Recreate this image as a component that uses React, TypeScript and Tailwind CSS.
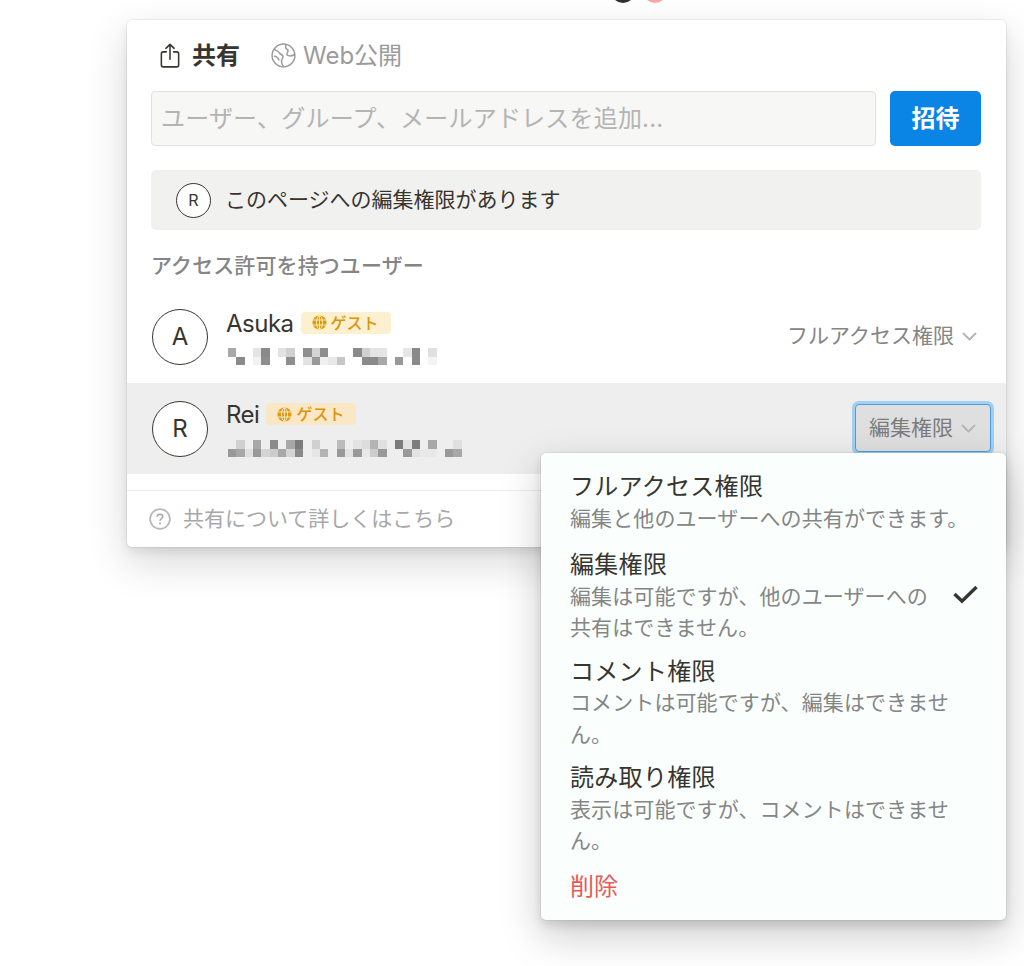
import React from "react";

const FONT = "font-['Inter','Noto_Sans_CJK_JP',sans-serif]";

const ShareIcon = () => (
  <svg width="20" height="27" viewBox="0 0 22 28" fill="none" stroke="#37352f" strokeWidth="1.7" strokeLinecap="round" strokeLinejoin="round">
    <path d="M7 10H3.5A2 2 0 0 0 1.5 12V24.5A2 2 0 0 0 3.5 26.5H18.5A2 2 0 0 0 20.5 24.5V12A2 2 0 0 0 18.5 10H15" />
    <path d="M11 18V2M6.5 6.2L11 1.8L15.5 6.2" />
  </svg>
);

const EarthIcon = () => (
  <svg width="25" height="25" viewBox="0 0 25 25" fill="none" stroke="#9b9b9b" strokeWidth="1.5" strokeLinejoin="round">
    <circle cx="12.5" cy="12.5" r="11.4" />
    <path d="M3.4 6.5C6 7.5 7.5 8 8.5 10C9.5 11.5 11 11.5 12 13C12.5 15 10.5 16 10.5 18C10.5 20 11.5 22.5 12.5 23.5" />
    <path d="M3 13C5.5 13.5 7.5 15 8 17.5" />
    <path d="M15 1.5C14 4 15 6 17 7C17.5 9 15.5 10 16 12C18 13.5 21 13 23.6 11.5" />
  </svg>
);

const BadgeGlobe = () => (
  <svg width="15" height="15" viewBox="0 0 15 15" fill="none" className="shrink-0">
    <circle cx="7.5" cy="7.5" r="7" fill="#dc9a12" />
    <g stroke="#fdf0cf" strokeWidth="0.9">
      <ellipse cx="7.5" cy="7.5" rx="3" ry="6.6" />
      <path d="M7.5 0.8V14.2M1 5H14M1 10H14" />
    </g>
  </svg>
);

const Chevron = () => (
  <svg width="15" height="9" viewBox="0 0 15 9" fill="none" stroke="#b5b5b5" strokeWidth="1.8" strokeLinecap="round" strokeLinejoin="round" className="shrink-0 mt-[2px]">
    <path d="M1.5 1.5L7.5 7.5L13.5 1.5" />
  </svg>
);

const Check = () => (
  <svg width="25" height="19" viewBox="0 0 25 19" fill="none" stroke="#37352f" strokeWidth="3.4" strokeLinejoin="miter" className="shrink-0">
    <path d="M1.5 9L9 16.2L23.5 2" />
  </svg>
);

const Help = () => (
  <svg width="22" height="22" viewBox="0 0 22 22" fill="none" className="shrink-0">
    <circle cx="11" cy="11" r="9.9" stroke="#b8b8b8" strokeWidth="1.7" />
    <path d="M8.2 8.6C8.3 7 9.5 6.2 11 6.2C12.6 6.2 13.8 7.1 13.8 8.6C13.8 10.6 11 10.6 11 12.8" stroke="#a8a8a8" strokeWidth="1.6" fill="none" />
    <circle cx="11" cy="15.6" r="1" fill="#a8a8a8" />
  </svg>
);

type Cell = [number, string];

const Mosaic = ({ top, bottom, width }: { top: Cell[]; bottom: Cell[]; width: number }) => (
  <svg width={width} height="17" viewBox={`0 0 ${width} 17`} shapeRendering="crispEdges" className="block ml-[2px]">
    {top.map(([i, c]) => (
      <rect key={`t${i}`} x={i * 8.35} y="0" width="8.4" height="8.5" fill={c} />
    ))}
    {bottom.map(([i, c]) => (
      <rect key={`b${i}`} x={i * 8.35} y="8.5" width="8.4" height="8.5" fill={c} />
    ))}
  </svg>
);

const asukaTop: Cell[] = [[0, "#a8a8a8"], [3, "#e4e4e4"], [4, "#8a8a8a"], [6, "#e2e2e2"], [7, "#d0d0d0"], [9, "#8e8e8e"], [10, "#d4d4d4"], [11, "#8e8e8e"], [15, "#8a8a8a"], [16, "#d0d0d0"], [17, "#e4e4e4"], [18, "#e4e4e4"], [21, "#e6e6e6"], [22, "#8a8a8a"], [24, "#e0e0e0"]];
const asukaBottom: Cell[] = [[1, "#8a8a8a"], [3, "#f2f2f2"], [4, "#8e8e8e"], [7, "#8e8e8e"], [9, "#e2e2e2"], [10, "#999999"], [11, "#f0f0f0"], [12, "#e8e8e8"], [13, "#c6c6c6"], [16, "#8a8a8a"], [17, "#8a8a8a"], [18, "#a8a8a8"], [20, "#999999"], [22, "#8a8a8a"], [24, "#f4f4f4"]];
const reiTop: Cell[] = [[1, "#d0d0d0"], [3, "#a8a8a8"], [5, "#8a8a8a"], [7, "#a8a8a8"], [8, "#7c7c7c"], [10, "#d0d0d0"], [13, "#bcbcbc"], [15, "#e2e2e2"], [16, "#dcdcdc"], [17, "#b4b4b4"], [18, "#e0e0e0"], [20, "#7c7c7c"], [21, "#e2e2e2"], [22, "#7c7c7c"], [24, "#a8a8a8"], [27, "#e0e0e0"]];
const reiBottom: Cell[] = [[0, "#999999"], [1, "#a8a8a8"], [2, "#e0e0e0"], [3, "#999999"], [4, "#d4d4d4"], [5, "#cccccc"], [6, "#a8a8a8"], [7, "#d4d4d4"], [8, "#8a8a8a"], [10, "#e6e6e6"], [11, "#b4b4b4"], [13, "#999999"], [14, "#e2e2e2"], [15, "#999999"], [16, "#e8e8e8"], [17, "#cccccc"], [18, "#999999"], [21, "#999999"], [22, "#e2e2e2"], [23, "#e8e8e8"], [24, "#e8e8e8"], [26, "#999999"], [27, "#a8a8a8"]];

const Avatar = ({ letter }: { letter: string }) => (
  <div className="w-[56px] h-[56px] shrink-0 rounded-full border-[1.5px] border-[#37352f] bg-white flex items-center justify-center text-[24px] text-[#37352f]">
    {letter}
  </div>
);

const Guest = ({ bg }: { bg: string }) => (
  <span className={`inline-flex items-center gap-[4px] h-[22px] w-[90px] pl-[11px] mb-[2px] rounded-[4px] text-[16px] tracking-normal font-medium text-[#d9960b] ${bg}`}>
    <BadgeGlobe />
    ゲスト
  </span>
);

const MenuItem = ({
  title,
  children,
  className,
}: {
  title: string;
  children: React.ReactNode;
  className: string;
}) => (
  <div className={className}>
    <div className="text-[24px] leading-[31.5px] tracking-[0.3px] text-[#37352f]">{title}</div>
    {children}
  </div>
);

export default function App() {
  return (
    <div className={`relative w-[1024px] h-[966px] overflow-hidden bg-white ${FONT}`}>
      <div className="absolute left-[611px] top-[-21px] w-[24px] h-[24px] rounded-full bg-[#2f2f2f]" />
      <div className="absolute left-[643px] top-[-21px] w-[24px] h-[24px] rounded-full bg-[#f3a9a9]" />

      <div className="pt-[20px] pl-[127px]">
        <div className="w-[879px] h-[527px] bg-white rounded-[5px] shadow-[0_0_0_1px_rgba(15,15,15,0.05),0_5px_10px_rgba(15,15,15,0.08),0_15px_40px_rgba(15,15,15,0.16)]">
          <div className="pl-[24px] pr-[25px] pt-[15px]">
            <div className="h-[40px] flex items-center pl-[9px]">
              <ShareIcon />
              <span className="ml-[12px] mt-[1px] text-[24px] font-semibold text-[#37352f]">共有</span>
              <span className="ml-[31px]"><EarthIcon /></span>
              <span className="ml-[7px] mt-[1px] text-[24px] text-[#9b9b9b]">Web公開</span>
            </div>

            <div className="mt-[16px] flex gap-[14px]">
              <input
                readOnly
                placeholder="ユーザー、グループ、メールアドレスを追加..."
                className="flex-1 min-w-0 h-[55px] px-[9px] bg-[#f7f7f5] border-[1.5px] border-[#e2e2e0] rounded-[4px] text-[24px] tracking-[0.2px] placeholder:text-[#b4b4b4] outline-none"
              />
              <div className="w-[91px] h-[55px] rounded-[5px] bg-[#0a85e6] text-white text-[24px] font-semibold flex items-center justify-center">
                招待
              </div>
            </div>

            <div className="mt-[24px] h-[60px] bg-[#f1f1ef] rounded-[5px] flex items-center pl-[25px]">
              <div className="w-[35px] h-[35px] rounded-full border-[1.5px] border-[#37352f] bg-white flex items-center justify-center text-[16px] text-[#37352f]">
                R
              </div>
              <span className="ml-[14px] text-[21px] text-[#37352f]">このページへの編集権限があります</span>
            </div>

            <div className="mt-[20px] h-[32px] flex items-center text-[21px] tracking-[0.1px] font-medium text-[#858585]">
              アクセス許可を持つユーザー
            </div>
          </div>

          <div className="mt-[9px]">
            <div className="h-[91px] pl-[25px] pr-[15px] flex items-center">
              <Avatar letter="A" />
              <div className="ml-[18px] flex-1">
                <div className="h-[30px] flex items-center gap-[7px] text-[24px] tracking-[-0.5px] text-[#37352f]">
                  Asuka
                  <Guest bg="bg-[#fdf0cf]" />
                </div>
                <div className="mt-[9px]"><Mosaic top={asukaTop} bottom={asukaBottom} width={214} /></div>
              </div>
              <div className="h-[48px] mb-[2px] px-[13px] flex items-center gap-[8px] text-[21px] text-[#858585] border-[1.5px] border-transparent">
                フルアクセス権限
                <Chevron />
              </div>
            </div>

            <div className="mt-[1px] h-[91px] pl-[25px] pr-[15px] flex items-center bg-[#eeeeee]">
              <Avatar letter="R" />
              <div className="ml-[18px] flex-1">
                <div className="h-[30px] flex items-center gap-[7px] text-[24px] tracking-[-0.5px] text-[#37352f]">
                  Rei
                  <Guest bg="bg-[#fae7c5]" />
                </div>
                <div className="mt-[10px]"><Mosaic top={reiTop} bottom={reiBottom} width={238} /></div>
              </div>
              <div className="h-[48px] mb-[2px] pl-[13px] pr-[14px] flex items-center gap-[8px] text-[21px] text-[#7c7c7c] bg-[#dfdfdf] rounded-[4px] border-[1.5px] border-[#4a9fe0] shadow-[0_0_0_3px_#a3cff0]">
                編集権限
                <Chevron />
              </div>
            </div>

            <div className="mt-[16px] border-t-[1.5px] border-[#ececea] h-[56px] pl-[22px] pt-[1px] flex items-center gap-[12px] text-[21px] text-[#a8a8a8]">
              <Help />
              共有について詳しくはこちら
            </div>
          </div>
        </div>
      </div>

      <div className="absolute left-[541px] top-[453px] w-[465px] h-[467px] rounded-[5px] bg-[#fafffd] pl-[29px] pt-[18px] shadow-[0_0_0_1px_rgba(15,15,15,0.05),0_5px_10px_rgba(15,15,15,0.12),0_15px_40px_rgba(15,15,15,0.22)]">
        <MenuItem title="フルアクセス権限" className="pb-[15px]">
          <div className="text-[21px] leading-[31.5px] tracking-[0.1px] text-[#858585] whitespace-nowrap">編集と他のユーザーへの共有ができます。</div>
        </MenuItem>
        <div className="relative">
          <MenuItem title="編集権限" className="pb-[12px]">
            <div className="w-[360px] text-[21px] leading-[31.5px] tracking-[0.1px] text-[#858585]">編集は可能ですが、他のユーザーへの共有はできません。</div>
          </MenuItem>
          <div className="absolute left-[383px] top-[36px]"><Check /></div>
        </div>
        <MenuItem title="コメント権限" className="pb-[12px]">
          <div className="w-[385px] text-[21px] leading-[31.5px] tracking-[0.1px] text-[#858585]">コメントは可能ですが、編集はできません。</div>
        </MenuItem>
        <MenuItem title="読み取り権限" className="pb-[12px]">
          <div className="w-[385px] text-[21px] leading-[31.5px] tracking-[0.1px] text-[#858585]">表示は可能ですが、コメントはできません。</div>
        </MenuItem>
        <div className="mt-[2px] text-[24px] leading-[31.5px] text-[#eb5757]">削除</div>
      </div>
    </div>
  );
}
